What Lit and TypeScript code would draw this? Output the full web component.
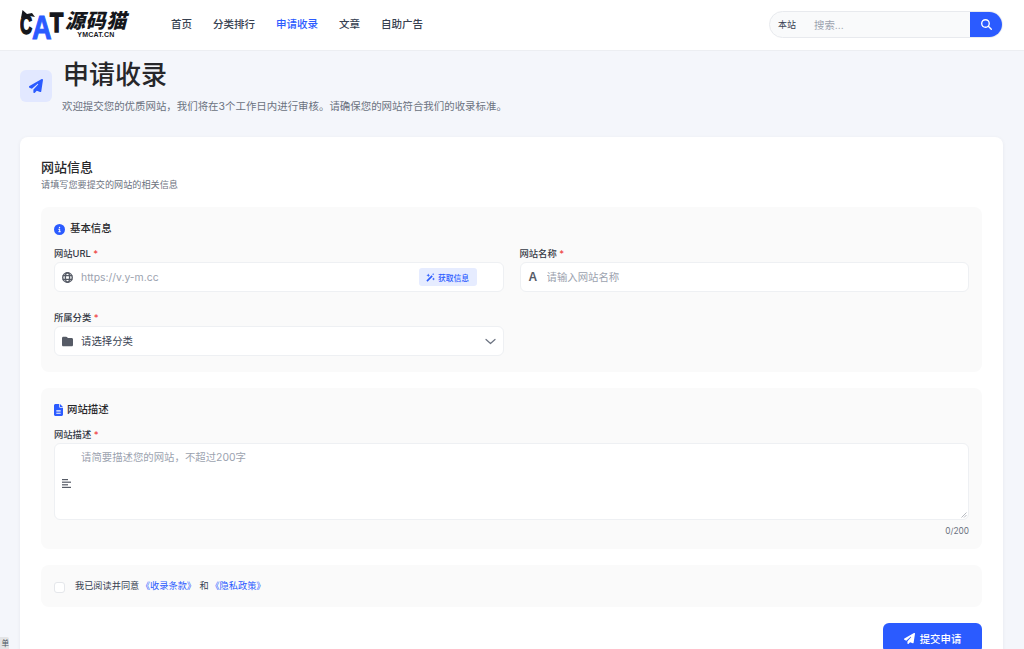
import { LitElement, html, css, svg } from "lit";
import { customElement } from "lit/decorators.js";

const PLANE = "M498.1 5.6c10.1 7 15.4 19.1 13.5 31.2l-64 416c-1.5 9.7-7.4 18.2-16 23s-18.9 5.4-28 1.6L284 427.7l-68.5 74.1c-8.9 9.7-22.9 12.9-35.2 8.1S160 493.2 160 480V396.4c0-4 1.5-7.8 4.2-10.7L331.8 202.8c5.8-6.3 5.6-16-.4-22s-15.7-6.4-22-.7L106 360.8 17.7 316.6C7.1 311.3 .3 300.7 0 288.9s5.9-22.8 16.1-28.7l448-256c10.7-6.1 23.9-5.5 34 1.4z";
const INFO = "M256 512A256 256 0 1 0 256 0a256 256 0 1 0 0 512zM216 336h24V272H216c-13.3 0-24-10.7-24-24s10.7-24 24-24h48c13.3 0 24 10.7 24 24v88h8c13.3 0 24 10.7 24 24s-10.7 24-24 24H216c-13.3 0-24-10.7-24-24s10.7-24 24-24zm40-208a32 32 0 1 1 0 64 32 32 0 1 1 0-64z";
const SEARCH = "M416 208c0 45.9-14.9 88.3-40 122.7L502.6 457.4c12.5 12.5 12.5 32.8 0 45.3s-32.8 12.5-45.3 0L330.7 376c-34.4 25.2-76.8 40-122.7 40C93.1 416 0 322.9 0 208S93.1 0 208 0S416 93.1 416 208zM208 352a144 144 0 1 0 0-288 144 144 0 1 0 0 288z";
const FOLDER = "M64 480H448c35.3 0 64-28.7 64-64V160c0-35.3-28.7-64-64-64H288c-10.1 0-19.6-4.7-25.6-12.8L243.2 57.6C231.1 41.5 212.1 32 192 32H64C28.7 32 0 60.7 0 96V416c0 35.3 28.7 64 64 64z";
const FILE = "M64 0C28.7 0 0 28.7 0 64V448c0 35.3 28.7 64 64 64H320c35.3 0 64-28.7 64-64V160H256c-17.7 0-32-14.3-32-32V0H64zM256 0V128H384L256 0zM112 256H272c8.8 0 16 7.2 16 16s-7.2 16-16 16H112c-8.8 0-16-7.2-16-16s7.2-16 16-16zm0 64H272c8.8 0 16 7.2 16 16s-7.2 16-16 16H112c-8.8 0-16-7.2-16-16s7.2-16 16-16zm0 64H272c8.8 0 16 7.2 16 16s-7.2 16-16 16H112c-8.8 0-16-7.2-16-16s7.2-16 16-16z";

const icon = (d: string, cls: string, vb = "0 0 512 512") =>
  html`<svg class=${cls} viewBox=${vb} fill="currentColor" aria-hidden="true">${svg`<path d=${d}></path>`}</svg>`;

@customElement("app-root")
export class AppRoot extends LitElement {
  static styles = css`
    :host {
      display: block;
      width: 1024px;
      height: 649px;
      overflow: hidden;
      position: relative;
      background: #f4f6fb;
      color: #1f2937;
      font-family: Inter, "Noto Sans CJK SC", "Liberation Sans", sans-serif;
    }
    * { box-sizing: border-box; }
    svg { display: block; flex: none; }

    .topbar {
      height: 51px;
      background: #fff;
      border-bottom: 1px solid #eceef2;
      display: flex;
      align-items: center;
      padding: 0 21px 2px 20px;
    }
    .logo { width: 108px; margin-right: 43px; display: flex; align-items: center; height: 30px; position: relative; top: 1px; }
    .cat { display: flex; align-items: center; font-family: "Liberation Sans", sans-serif; font-weight: 700; line-height: 1; color: #15171c; }
    .cat span { display: block; transform-origin: 0 50%; }
    .cat .c { font-size: 27px; width: 12px; transform: scaleX(.62); -webkit-text-stroke: 1.6px #15171c; }
    .cat .a { font-size: 33px; width: 18px; transform: translateY(2px) scaleX(.82); color: #2b5bff; -webkit-text-stroke: 1px #2b5bff; }
    .cat .t { font-size: 27px; width: 13px; transform: translateY(-2px) scaleX(.8); -webkit-text-stroke: 1.6px #15171c; }
    .ears { position: absolute; left: 1px; top: 0; width: 14px; height: 8px; color: #15171c; }
    .brand { display: flex; flex-direction: column; align-items: center; margin-left: 2px; }
    .brand b { font-size: 20px; line-height: 19px; font-weight: 900; font-style: italic; color: #15171c; letter-spacing: .6px; white-space: nowrap; }
    .brand i { font-family: "Liberation Sans", sans-serif; font-style: normal; font-size: 7px; line-height: 7px; font-weight: 700; color: #15171c; letter-spacing: .2px; }

    .nav { display: flex; gap: 21px; font-size: 10.5px; font-weight: 500; color: #374151; margin-bottom: 1px; }
    .nav .active { color: #2b5bff; }

    .search {
      margin-left: auto;
      width: 234px;
      height: 27px;
      display: flex;
      align-items: center;
      background: #f9fafb;
      border: 1px solid #e8eaee;
      border-radius: 14px;
      overflow: hidden;
    }
    .scope { font-size: 9px; color: #374151; padding-left: 8px; width: 44px; }
    .search span.ph { font-size: 10.4px; color: #9ca3af; flex: 1; }
    .search button {
      width: 32px;
      height: 27px;
      border: 0;
      background: #2b5bff;
      color: #fff;
      display: flex;
      align-items: center;
      justify-content: center;
      padding: 0;
    }
    .i-search { width: 11px; height: 11px; }

    main { padding: 7px 21px 0 20px; }
    .hero { display: flex; align-items: center; gap: 10px; margin-bottom: 23px; }
    .hero-icon {
      width: 32px; height: 32px; border-radius: 6px;
      background: #e2e8ff; color: #2b5bff;
      display: flex; align-items: center; justify-content: center;
    }
    .i-hero { width: 14px; height: 14px; }
    h1 { margin: 0 0 8px 1px; font-size: 26px; line-height: 34px; font-weight: 500; color: #27272a; }
    .hero p { margin: 0; font-size: 10.45px; line-height: 14px; color: #6b7280; white-space: nowrap; }

    .card {
      background: #fff;
      border-radius: 8px;
      padding: 20px 21px 40px;
      box-shadow: 0 1px 4px rgba(30, 41, 59, .06);
    }
    h2 { margin: 0 0 1px; font-size: 13px; line-height: 20px; font-weight: 500; color: #27272a; }
    .card-sub { margin: 0 0 15px; font-size: 9.13px; line-height: 14px; color: #6b7280; }

    .section { background: #fafafa; border-radius: 8px; padding: 14px 13px 16px; margin-bottom: 16px; }
    .section.desc { padding-bottom: 11px; }
    h3 { margin: 0 0 10px; display: flex; align-items: center; gap: 5px; font-size: 10.4px; line-height: 16px; font-weight: 500; color: #27272a; }
    .i-h { width: 11px; height: 11px; color: #2b5bff; }
    .i-file { width: 9px; height: 12px; color: #2b5bff; margin-right: -1px; }

    .grid { display: grid; grid-template-columns: 1fr 1fr; column-gap: 16px; row-gap: 19px; }
    label.lbl { display: block; font-size: 9.3px; line-height: 14px; font-weight: 500; color: #333844; margin-bottom: 1px; }
    .req { color: #ef4444; margin-left: 2.5px; }

    .control {
      position: relative;
      height: 30px;
      background: #fff;
      border: 1px solid #eef0f3;
      border-radius: 6px;
      display: flex;
      align-items: center;
    }
    .lead { position: absolute; left: 7px; width: 11px; height: 11px; color: #565b66; }
    .glyph { position: absolute; left: 8px; font-family: "Liberation Sans", sans-serif; font-weight: 700; font-size: 12px; line-height: 1; color: #565b66; }
    input, select, textarea {
      border: 0; outline: 0; background: transparent; width: 100%; height: 100%;
      padding: 0 0 0 26px; font-family: inherit; font-size: 10.4px; color: #374151;
      appearance: none; -webkit-appearance: none;
    }
    ::placeholder { color: #9ca3af; opacity: 1; }
    .fetch {
      position: absolute; right: 26px; top: 5px; height: 18px; width: 58px;
      background: #e6ecff; color: #2b5bff; border: 0; border-radius: 3px;
      display: flex; align-items: center; justify-content: center; gap: 3px;
      font-family: inherit; font-size: 7.8px; font-weight: 500; padding: 0;
    }
    .i-wand { width: 9px; height: 9px; }
    .chev { position: absolute; right: 7px; width: 11px; height: 7px; color: #6b7280; }

    .area { height: 77px; display: block; }
    textarea { display: block; padding: 7px 8px 0 26px; resize: none; line-height: 14px; }
    .area .lines { position: absolute; left: 7px; top: 35px; width: 10px; height: 9px; color: #565b66; }
    .grip { position: absolute; right: 1px; bottom: 1px; width: 6px; height: 6px; color: #9a9ea6; }
    .count { text-align: right; font-size: 8.3px; line-height: 14px; margin-top: 4px; color: #6b7280; }

    .agree {
      height: 42px; background: #fafafa; border-radius: 8px; margin-bottom: 16px;
      padding: 0 13px; display: flex; align-items: center; gap: 10px;
      font-size: 9.2px; color: #374151;
    }
    .check { width: 11px; height: 11px; margin-top: 3px; background: #fff; border: 1px solid #e5e7eb; border-radius: 3px; }
    .agree-text { margin-bottom: 3px; white-space: nowrap; flex: none; }
    .agree a { color: #2b5bff; text-decoration: none; margin: 0 1px 0 -1px; }
    .actions { display: flex; justify-content: flex-end; }
    .submit {
      width: 99px; height: 30px; border: 0; border-radius: 6px;
      background: #2b5bff; color: #fff;
      display: flex; align-items: center; justify-content: center; gap: 5px;
      font-family: inherit; font-size: 10.4px; font-weight: 500; padding: 0;
    }
    .i-submit { width: 11px; height: 11px; }

    .stub {
      position: absolute; left: -3px; bottom: -2px; width: 12px; height: 14px;
      border-radius: 2px; background: #e3e4e6; color: #4b5563;
      font-size: 7.5px; line-height: 14px; text-align: right; overflow: hidden;
    }
  `;

  render() {
    return html`
      <header class="topbar">
        <div class="logo">
          <svg class="ears" viewBox="0 0 14 8" fill="currentColor"><path d="M0 8 1.5 0 6 4 11 3 14 7 9 6 4 7Z"></path></svg>
          <div class="cat"><span class="c">C</span><span class="a">A</span><span class="t">T</span></div>
          <div class="brand"><b>源码猫</b><i>YMCAT.CN</i></div>
        </div>
        <nav class="nav">
          <span>首页</span><span>分类排行</span><span class="active">申请收录</span><span>文章</span><span>自助广告</span>
        </nav>
        <div class="search">
          <span class="scope">本站</span>
          <span class="ph">搜索...</span>
          <button aria-label="搜索">${icon(SEARCH, "i-search")}</button>
        </div>
      </header>

      <main>
        <div class="hero">
          <div class="hero-icon">${icon(PLANE, "i-hero")}</div>
          <div>
            <h1>申请收录</h1>
            <p>欢迎提交您的优质网站，我们将在3个工作日内进行审核。请确保您的网站符合我们的收录标准。</p>
          </div>
        </div>

        <section class="card">
          <h2>网站信息</h2>
          <p class="card-sub">请填写您要提交的网站的相关信息</p>

          <div class="section">
            <h3>${icon(INFO, "i-h")}基本信息</h3>
            <div class="grid">
              <div>
                <label class="lbl">网站URL<span class="req">*</span></label>
                <div class="control">
                  <svg class="lead" viewBox="0 0 12 12" fill="none" stroke="currentColor" stroke-width="1.5">
                    <circle cx="6" cy="6" r="5.2"></circle>
                    <ellipse cx="6" cy="6" rx="2.3" ry="5.2"></ellipse>
                    <path d="M.8 4h10.4M.8 8h10.4"></path>
                  </svg>
                  <input placeholder="https://v.y-m.cc" />
                  <button class="fetch">
                    <svg class="i-wand" viewBox="0 0 12 12" fill="currentColor">
                      <path d="M.5 10 7.500 3l1.500 1.500-7 7z"></path>
                      <path d="M3 .5l.7 1.800 1.800.7-1.800.7L3 5.500l-.7-1.800L.5 3l1.800-.7zM10 6l.6 1.400 1.400.6-1.400.6L10 10l-.6-1.400L8 8l1.400-.6zM9.500 0l.4 1.100 1.100.4-1.100.4-.4 1.100-.4-1.100L8 1.500l1.100-.4z"></path>
                    </svg>
                    获取信息
                  </button>
                </div>
              </div>
              <div>
                <label class="lbl">网站名称<span class="req">*</span></label>
                <div class="control">
                  <span class="glyph">A</span>
                  <input placeholder="请输入网站名称" />
                </div>
              </div>
              <div>
                <label class="lbl">所属分类<span class="req">*</span></label>
                <div class="control">
                  ${icon(FOLDER, "lead")}
                  <select><option>请选择分类</option></select>
                  <svg class="chev" viewBox="0 0 11 7" fill="none" stroke="currentColor" stroke-width="1.200" stroke-linecap="round" stroke-linejoin="round"><path d="M1 1.500 5.500 5.500 10 1.500"></path></svg>
                </div>
              </div>
            </div>
          </div>

          <div class="section desc">
            <h3>${icon(FILE, "i-file", "0 0 384 512")}网站描述</h3>
            <label class="lbl">网站描述<span class="req">*</span></label>
            <div class="control area">
              <svg class="lines" viewBox="0 0 10 9" fill="currentColor">
                <rect x="0" y="0" width="6" height="1.200"></rect>
                <rect x="0" y="2.600" width="9" height="1.200"></rect>
                <rect x="0" y="5.200" width="6" height="1.200"></rect>
                <rect x="0" y="7.800" width="9" height="1.200"></rect>
              </svg>
              <textarea placeholder="请简要描述您的网站，不超过200字"></textarea>
              <svg class="grip" viewBox="0 0 6 6" fill="none" stroke="currentColor" stroke-width=".7"><path d="M.5 5.500 5.500.5M3 5.500 5.500 3"></path></svg>
            </div>
            <div class="count">0/200</div>
          </div>

          <div class="agree">
            <span class="check"></span>
            <span class="agree-text">我已阅读并同意 <a>《收录条款》</a> 和 <a>《隐私政策》</a></span>
          </div>

          <div class="actions">
            <button class="submit">${icon(PLANE, "i-submit")}提交申请</button>
          </div>
        </section>
      </main>
      <div class="stub">单</div>
    `;
  }
}
